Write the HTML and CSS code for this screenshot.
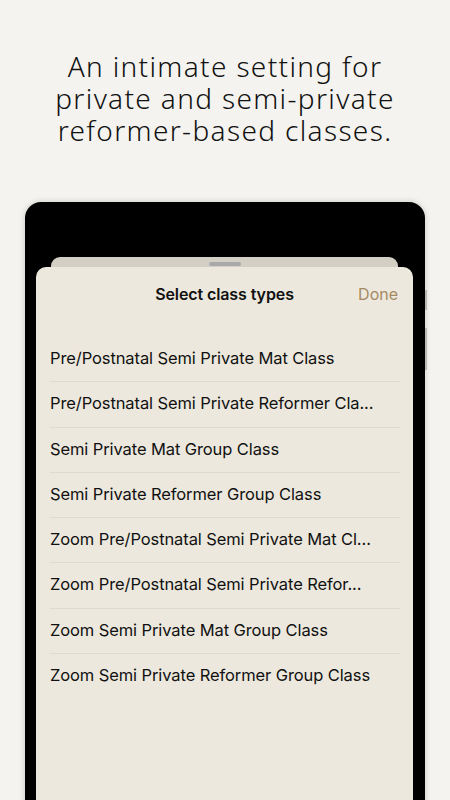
FILE: index.html
```html
<!DOCTYPE html>
<html lang="en">
<head>
    <meta charset="UTF-8">
    <meta name="viewport" content="width=device-width, initial-scale=1.0">
    <title>Select class types</title>
    <link rel="stylesheet" href="styles.css">
</head>
<body>

<h1 class="headline">An intimate setting for private and semi-private reformer-based classes.</h1>

<div class="device">
    <span class="side-btn side-btn-top"></span>
    <span class="side-btn side-btn-bottom"></span>

    <div class="back-sheet">
        <span class="grabber"></span>
    </div>

    <div class="sheet">
        <div class="sheet-header">
            <span class="sheet-title">Select class types</span>
            <span class="done">Done</span>
        </div>

        <ul class="class-list">
            <li>Pre/Postnatal Semi Private Mat Class</li>
            <li>Pre/Postnatal Semi Private Reformer Cla...</li>
            <li>Semi Private Mat Group Class</li>
            <li>Semi Private Reformer Group Class</li>
            <li>Zoom Pre/Postnatal Semi Private Mat Cl...</li>
            <li>Zoom Pre/Postnatal Semi Private Refor...</li>
            <li>Zoom Semi Private Mat Group Class</li>
            <li class="last">Zoom Semi Private Reformer Group Class</li>
        </ul>
    </div>
</div>

</body>
</html>
```

FILE: styles.css
```css
body {
    margin: 0;
    padding: 0;
    background-color: #f4f3ef;
    font-family: Inter, "Noto Sans", sans-serif;
    color: #111;
    height: 800px;
    overflow: hidden;
}

.headline {
    margin: 0;
    padding: 50px 40px 0;
    text-align: center;
    font-family: "Noto Sans", sans-serif;
    font-weight: 300;
    font-size: 28px;
    line-height: 32px;
    letter-spacing: 1.35px;
    color: #111;
}

.device {
    position: relative;
    margin: 56px 25px 0;
    padding: 55px 12px 0 11px;
    height: 700px;
    background-color: #000;
    border-radius: 16px;
    box-shadow: 0 0 6px rgba(0, 0, 0, 0.18);
}

/* little gray buttons on the right edge */
.side-btn {
    position: absolute;
    right: -2px;
    width: 2px;
    background-color: #b9b7b2;
}

.side-btn-top {
    top: 88px;
    height: 20px;
}

.side-btn-bottom {
    top: 126px;
    height: 42px;
}

.back-sheet {
    display: flex;
    justify-content: center;
    margin: 0 15px;
    padding-top: 5px;
    height: 5px;
    background-color: #d3cfc5;
    border-radius: 9px 9px 0 0;
}

.grabber {
    width: 32px;
    height: 4px;
    border-radius: 2px;
    background-color: #aaa9aa;
}

.sheet {
    height: 600px;
    background-color: #ece8dd;
    border-radius: 10px 10px 0 0;
}

.sheet-header {
    position: relative;
    display: flex;
    justify-content: center;
    align-items: center;
    height: 54px;
}

.sheet-title {
    font-size: 16px;
    font-weight: 600;
    letter-spacing: -0.1px;
}

.done {
    position: absolute;
    right: 15px;
    top: 17px;
    font-size: 16px;
    color: #a68a62;
}

.class-list {
    list-style: none;
    margin: 0;
    padding: 16px 0 0 14px;
}

.class-list li {
    box-sizing: border-box;
    height: 45.3px;
    padding-top: 11px;
    margin-right: 13px;
    font-size: 16.5px;
    letter-spacing: -0.1px;
    border-bottom: 1px solid #e0dbcf;
    white-space: nowrap;
}

.class-list li.last {
    border-bottom: none;
}
```
